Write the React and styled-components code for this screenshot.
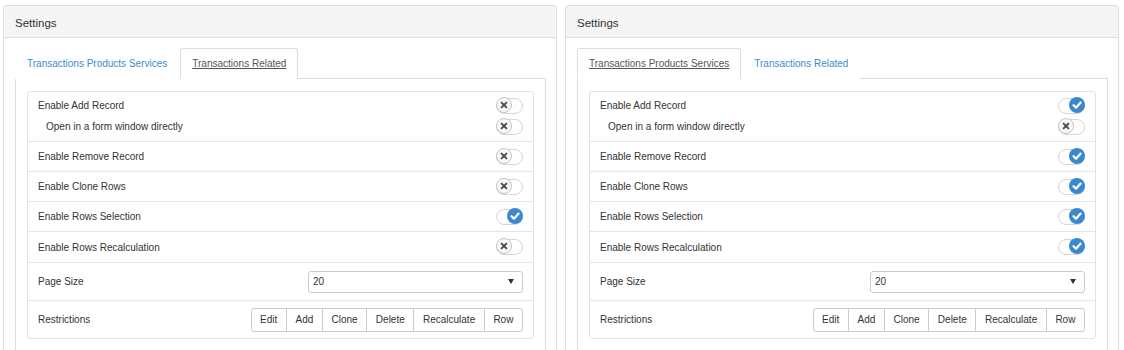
import React from "react";
import styled, { createGlobalStyle } from "styled-components";

const GlobalStyle = createGlobalStyle`
    html, body {
        margin: 0;
        padding: 0;
        overflow: hidden;
        background: #fff;
    }
    body {
        font-family: "Liberation Sans", Arial, sans-serif;
        color: #333;
        font-size: 10px;
    }
`;

const Page = styled.div`
    display: flex;
    gap: 8px;
    padding: 5px 3px;
    align-items: flex-start;
`;

const Panel = styled.div`
    width: 554px;
    box-sizing: border-box;
    border: 1px solid #ddd;
    border-radius: 3px;
    background: #fff;
`;

const PanelHeading = styled.div`
    display: flex;
    align-items: center;
    padding: 2px 11px 0;
    box-sizing: border-box;
    height: 32px;
    background: #f5f5f5;
    border-bottom: 1px solid #ddd;
    font-size: 11.5px;
    color: #333;
`;

const PanelBody = styled.div`
    padding: 10px 10px 12px 11px;
`;

const TabNav = styled.div`
    display: flex;
    border-bottom: 1px solid #ddd;
`;

const Tab = styled.div`
    height: 29px;
    display: flex;
    align-items: center;
    padding: 0 11px;
    margin-right: 1px;
    margin-bottom: -1px;
    border: 1px solid ${(p) => (p.$active ? "#ddd" : "transparent")};
    border-bottom-color: ${(p) => (p.$active ? "#fff" : "transparent")};
    border-radius: 3px 3px 0 0;
    background: #fff;
    color: ${(p) => (p.$active ? "#555" : "#428bca")};
    text-decoration: ${(p) => (p.$active ? "underline" : "none")};
    cursor: pointer;
`;

const TabContent = styled.div`
    border: 1px solid #ddd;
    border-top: none;
    padding: 12px 11px 14px 11px;
`;

const Card = styled.div`
    border: 1px solid #e3e3e3;
    border-radius: 3px;
`;

const Row = styled.div`
    display: flex;
    flex-direction: ${(p) => (p.$stack ? "column" : "row")};
    align-items: ${(p) => (p.$stack ? "stretch" : "center")};
    justify-content: space-between;
    height: ${(p) => (p.$stack ? "auto" : `${p.$h || 29}px`)};
    padding: ${(p) => (p.$stack ? "3px 10px 4px" : "0 10px")};
    border-bottom: 1px solid #e6e6e6;
    &:last-child {
        border-bottom: none;
    }
`;

const SubLine = styled.div`
    height: 21px;
    display: flex;
    align-items: center;
    justify-content: space-between;
    padding-left: ${(p) => (p.$indent ? "8px" : "0")};
`;

const Label = styled.span`
    color: #333;
`;

const Track = styled.span`
    position: relative;
    display: inline-block;
    width: 25px;
    height: 14px;
    border: 1px solid #d6d6d6;
    border-radius: 8px;
    background: #fff;
    flex-shrink: 0;
`;

const Knob = styled.span`
    position: absolute;
    top: -2px;
    ${(p) => (p.$on ? "right: -1px;" : "left: -1px;")}
    width: 16px;
    height: 16px;
    box-sizing: border-box;
    border-radius: 50%;
    border: ${(p) => (p.$on ? "none" : "1px solid #c4c4c4")};
    background: ${(p) => (p.$on ? "#3b88cf" : "#f8f8f8")};
    display: flex;
    align-items: center;
    justify-content: center;
`;

const SelectBox = styled.div`
    width: 215px;
    height: 22px;
    box-sizing: border-box;
    border: 1px solid #ccc;
    border-radius: 3px;
    display: flex;
    align-items: center;
    justify-content: space-between;
    padding: 0 8px 0 4px;
    color: #333;
    background: #fff;
`;

const Caret = styled.span`
    width: 0;
    height: 0;
    border-left: 3px solid transparent;
    border-right: 3px solid transparent;
    border-top: 5px solid #333;
`;

const ButtonGroup = styled.div`
    display: flex;
`;

const GroupButton = styled.button`
    height: 24px;
    padding: 0 8.6px;
    margin-left: -1px;
    border: 1px solid #ccc;
    background: #fff;
    color: #333;
    font-family: inherit;
    font-size: 10px;
    cursor: pointer;
    &:first-child {
        margin-left: 0;
        border-radius: 3px 0 0 3px;
    }
    &:last-child {
        border-radius: 0 3px 3px 0;
    }
`;

function Toggle({ on }) {
    return (
        <Track>
            <Knob $on={on}>
                {on ? (
                    <svg width="16" height="16" viewBox="0 0 16 16">
                        <polyline
                            points="4.5,8.2 7,10.7 11.6,5.6"
                            fill="none"
                            stroke="#fff"
                            strokeWidth="2.2"
                            strokeLinecap="round"
                            strokeLinejoin="round"
                        />
                    </svg>
                ) : (
                    <svg width="14" height="14" viewBox="0 0 14 14">
                        <path
                            d="M4.6 4.6 L9.4 9.4 M9.4 4.6 L4.6 9.4"
                            stroke="#4a4f57"
                            strokeWidth="2"
                            strokeLinecap="round"
                        />
                    </svg>
                )}
            </Knob>
        </Track>
    );
}

const restrictions = ["Edit", "Add", "Clone", "Delete", "Recalculate", "Row"];

function SettingsPanel({ activeTab, flags }) {
    const tabs = ["Transactions Products Services", "Transactions Related"];
    return (
        <Panel>
            <PanelHeading>Settings</PanelHeading>
            <PanelBody>
                <TabNav>
                    {tabs.map((t, i) => (
                        <Tab key={t} $active={i === activeTab}>
                            {t}
                        </Tab>
                    ))}
                </TabNav>
                <TabContent>
                    <Card>
                        <Row $stack>
                            <SubLine>
                                <Label>Enable Add Record</Label>
                                <Toggle on={flags.add} />
                            </SubLine>
                            <SubLine $indent>
                                <Label>Open in a form window directly</Label>
                                <Toggle on={flags.form} />
                            </SubLine>
                        </Row>
                        <Row>
                            <Label>Enable Remove Record</Label>
                            <Toggle on={flags.remove} />
                        </Row>
                        <Row>
                            <Label>Enable Clone Rows</Label>
                            <Toggle on={flags.clone} />
                        </Row>
                        <Row>
                            <Label>Enable Rows Selection</Label>
                            <Toggle on={flags.selection} />
                        </Row>
                        <Row $h={30}>
                            <Label>Enable Rows Recalculation</Label>
                            <Toggle on={flags.recalc} />
                        </Row>
                        <Row $h={37}>
                            <Label>Page Size</Label>
                            <SelectBox>
                                <span>20</span>
                                <Caret />
                            </SelectBox>
                        </Row>
                        <Row $h={37}>
                            <Label>Restrictions</Label>
                            <ButtonGroup>
                                {restrictions.map((r) => (
                                    <GroupButton key={r}>{r}</GroupButton>
                                ))}
                            </ButtonGroup>
                        </Row>
                    </Card>
                </TabContent>
            </PanelBody>
        </Panel>
    );
}

export default function App() {
    return (
        <>
            <GlobalStyle />
            <Page>
                <SettingsPanel
                    activeTab={1}
                    flags={{
                        add: false,
                        form: false,
                        remove: false,
                        clone: false,
                        selection: true,
                        recalc: false,
                    }}
                />
                <SettingsPanel
                    activeTab={0}
                    flags={{
                        add: true,
                        form: false,
                        remove: true,
                        clone: true,
                        selection: true,
                        recalc: true,
                    }}
                />
            </Page>
        </>
    );
}
